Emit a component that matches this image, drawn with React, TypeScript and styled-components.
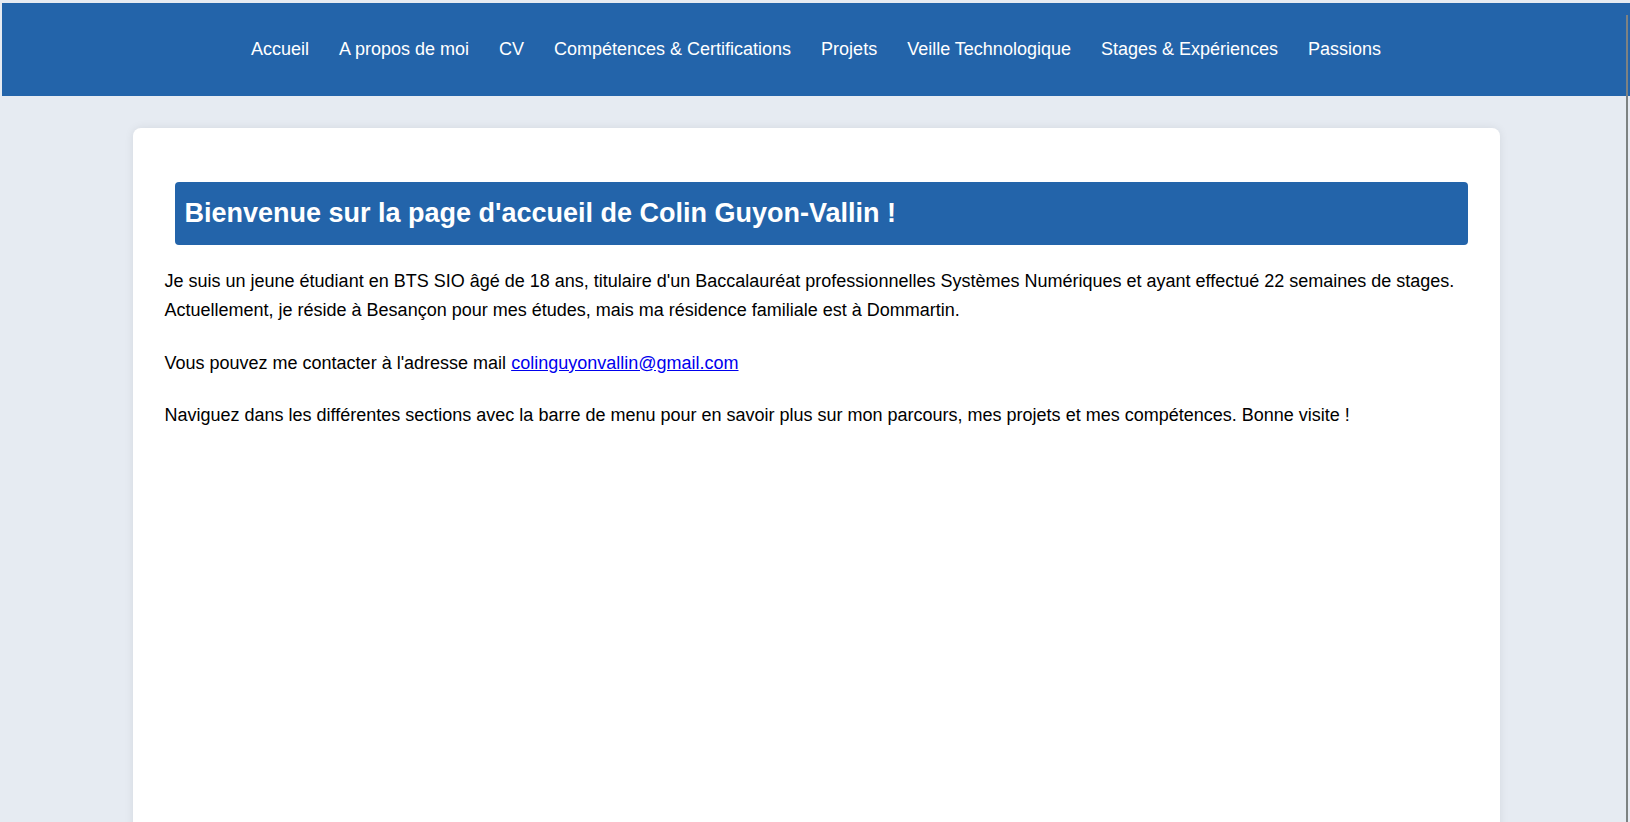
import React from "react";
import styled, { createGlobalStyle } from "styled-components";

const navItems = [
  "Accueil",
  "A propos de moi",
  "CV",
  "Compétences & Certifications",
  "Projets",
  "Veille Technologique",
  "Stages & Expériences",
  "Passions",
];

export default function App() {
  return (
    <>
      <GlobalStyle />
      <Header>
        <Nav>
          {navItems.map((item) => (
            <NavLink key={item} href="#">
              {item}
            </NavLink>
          ))}
        </Nav>
      </Header>
      <Main>
        <Card>
          <Title>Bienvenue sur la page d'accueil de Colin Guyon-Vallin !</Title>
          <Text>
            Je suis un jeune étudiant en BTS SIO âgé de 18 ans, titulaire d'un
            Baccalauréat professionnelles Systèmes Numériques et ayant effectué
            22 semaines de stages. Actuellement, je réside à Besançon pour mes
            études, mais ma résidence familiale est à Dommartin.
          </Text>
          <Text>
            Vous pouvez me contacter à l'adresse mail{" "}
            <MailLink href="mailto:colinguyonvallin@gmail.com">
              colinguyonvallin@gmail.com
            </MailLink>
          </Text>
          <Text>
            Naviguez dans les différentes sections avec la barre de menu pour en
            savoir plus sur mon parcours, mes projets et mes compétences. Bonne
            visite !
          </Text>
        </Card>
      </Main>
      <ScrollLine />
    </>
  );
}

const GlobalStyle = createGlobalStyle`
  html, body {
    margin: 0;
    height: 100%;
    overflow: hidden;
  }

  body {
    padding: 3px 0 0 2px;
    box-sizing: border-box;
    background: #e6ebf2;
    font-family: "Liberation Sans", Arial, sans-serif;
    color: #000;
  }
`;

const Header = styled.header`
  background: #2364aa;
  height: 93px;
  display: flex;
  align-items: center;
  justify-content: center;
  padding-bottom: 2px;
  box-sizing: border-box;
`;

const Nav = styled.nav`
  display: flex;
  gap: 30px;
`;

const NavLink = styled.a`
  color: #fff;
  text-decoration: none;
  font-size: 18px;
  line-height: 22px;
`;

const Main = styled.main`
  padding-top: 32px;
`;

const Card = styled.section`
  width: 1367px;
  min-height: 760px;
  margin: 0 auto;
  box-sizing: border-box;
  padding: 54px 30px 30px 32px;
  background: #fff;
  border-radius: 8px;
  box-shadow: 0 0 10px rgba(0, 0, 0, 0.08);
`;

const Title = styled.h1`
  margin: 0 2px 22px 10px;
  padding: 16px 10px;
  background: #2364aa;
  border-radius: 4px;
  color: #fff;
  font-size: 27px;
  line-height: 31px;
  font-weight: bold;
`;

const Text = styled.p`
  margin: 0 0 24px;
  font-size: 18px;
  line-height: 1.6;
`;

const MailLink = styled.a`
  color: #0000ee;
`;

const ScrollLine = styled.div`
  position: fixed;
  top: 15px;
  right: 2px;
  bottom: 0;
  width: 2px;
  background: #7d8282;
`;
